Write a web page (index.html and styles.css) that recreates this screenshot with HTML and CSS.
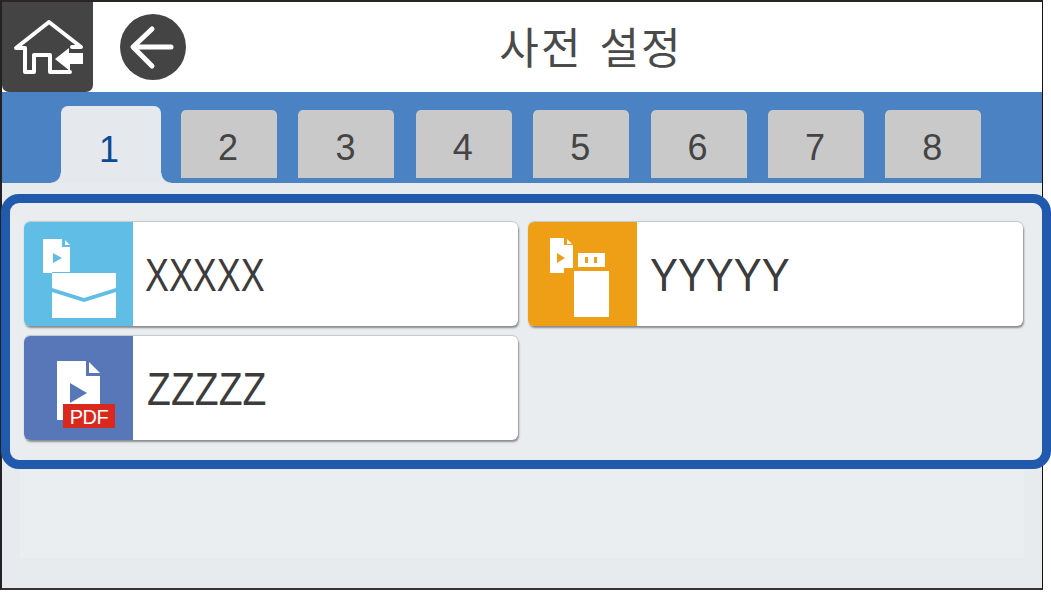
FILE: index.html
```html
<!DOCTYPE html>
<html lang="ko">
<head>
    <meta charset="UTF-8">
    <title>사전 설정</title>
    <link rel="stylesheet" href="styles.css">
</head>
<body>
    <div class="screen">
        <div class="header">
            <div class="home-btn">
                <svg width="91" height="90" viewBox="0 0 91 90">
                    <path class="line home-line" d="M68 70H48V53H32V70H23V46H14L47 20L79 45H70"/>
                    <path class="solid" d="M67 46L53 57L68 69V62H81V51H67Z"/>
                </svg>
            </div>
            <div class="back-btn">
                <svg width="66" height="66" viewBox="0 0 66 66">
                    <path class="line" d="M51 33H14M32 15L13 33L32 52"/>
                </svg>
            </div>
            <h1 class="title">사전 설정</h1>
        </div>

        <div class="tabs">
            <div class="tab active">1</div>
            <div class="tab">2</div>
            <div class="tab">3</div>
            <div class="tab">4</div>
            <div class="tab">5</div>
            <div class="tab">6</div>
            <div class="tab">7</div>
            <div class="tab">8</div>
        </div>

        <div class="panel">
            <div class="tile">
                <div class="tile-icon mail">
                    <svg width="109" height="104" viewBox="0 0 109 104">
                        <path class="solid" d="M19 17H38V25H46V50H28V51H19Z"/>
                        <path class="solid" d="M41 18L46 23H41Z"/>
                        <path class="mail-fill" d="M29 31L38 36L29 41Z"/>
                        <path class="solid" d="M28 51H92V66L60 76L28 66Z"/>
                        <path class="solid" d="M28 70L60 80L92 70V96H28Z"/>
                    </svg>
                </div>
                <span class="tile-label label-x">XXXXX</span>
            </div>
            <div class="tile">
                <div class="tile-icon usb">
                    <svg width="109" height="104" viewBox="0 0 109 104">
                        <path class="solid" d="M22 16H36V23H45V46H36V51H22Z"/>
                        <path class="solid" d="M39 17L44 22H39Z"/>
                        <path class="usb-fill" d="M29 31L37 36L29 41Z"/>
                        <path class="solid" fill-rule="evenodd" d="M50 31H77V45H50ZM57 35V41H60V35ZM66 35V41H69V35Z"/>
                        <rect class="solid" x="46" y="49" width="35" height="46"/>
                    </svg>
                </div>
                <span class="tile-label label-y">YYYYY</span>
            </div>
            <div class="tile">
                <div class="tile-icon pdf">
                    <svg width="109" height="104" viewBox="0 0 109 104">
                        <path class="solid" d="M33 25H62V40H76V84H33Z"/>
                        <path class="solid" d="M65 26L76 37H65Z"/>
                        <path class="pdf-fill" d="M46 47L63 57L46 67Z"/>
                        <rect class="pdf-badge" x="39" y="68" width="52" height="24"/>
                        <text class="pdf-text" x="65" y="88">PDF</text>
                    </svg>
                </div>
                <span class="tile-label label-z">ZZZZZ</span>
            </div>
        </div>

        <div class="spare"></div>
    </div>
</body>
</html>
```

FILE: styles.css
```css
body {
    margin: 0;
    background-color: #fff;
    font-family: "Liberation Sans", Arial, sans-serif;
}

.screen {
    width: 1040px;
    height: 586px;
    border-top: 2px solid #2a2622;
    border-left: 2px solid #222;
    border-right: 1px solid #111;
    border-bottom: 2px solid #333;
    background-color: #e7ebee;
}

/* header */
.header {
    height: 90px;
    display: flex;
    align-items: center;
    background-color: #fff;
}
.home-btn {
    width: 91px;
    height: 90px;
    background-color: #444;
    border-radius: 0 0 7px 7px;
}
.back-btn {
    width: 66px;
    height: 66px;
    margin-left: 27px;
    background-color: #444;
    border-radius: 50%;
}
.header svg {
    display: block;
}
.line {
    fill: none;
    stroke: #fff;
    stroke-width: 5;
    stroke-linecap: round;
    stroke-linejoin: round;
}
.home-line {
    stroke-width: 4;
}
.solid {
    fill: #fff;
}
.title {
    flex: 1;
    margin: 0;
    padding-right: 46px;
    padding-bottom: 4px;
    text-align: center;
    font-family: "Noto Sans CJK KR", sans-serif;
    font-size: 43px;
    font-weight: 400;
    letter-spacing: 2px;
    word-spacing: 3px;
    color: #4a4a4a;
}

/* tabs */
.tabs {
    height: 91px;
    display: flex;
    align-items: flex-end;
    padding-left: 59px;
    box-sizing: border-box;
    background-color: #4a82c4;
}
.tab {
    width: 96px;
    height: 68px;
    margin-right: 21.4px;
    margin-bottom: 5px;
    padding-right: 2px;
    box-sizing: border-box;
    line-height: 75px;
    text-align: center;
    font-size: 36px;
    color: #444;
    background-color: #c9c9c9;
    border-radius: 5px 5px 0 0;
}
.tab.active {
    position: relative;
    width: 100px;
    height: 77px;
    margin-right: 20px;
    margin-bottom: 0;
    padding-right: 4px;
    line-height: 87px;
    color: #0d4a94;
    background-color: #e5e9ee;
    border-radius: 7px 7px 0 0;
}
.tab.active::before,
.tab.active::after {
    content: "";
    position: absolute;
    bottom: 0;
    width: 10px;
    height: 10px;
}
.tab.active::before {
    left: -10px;
    background: radial-gradient(circle at 0 0, #4a82c4 9px, #e5e9ee 10px);
}
.tab.active::after {
    right: -10px;
    background: radial-gradient(circle at 100% 0, #4a82c4 9px, #e5e9ee 10px);
}

/* highlighted panel */
.panel {
    display: grid;
    grid-template-columns: 494px 495px;
    grid-auto-rows: 104px;
    gap: 10px;
    margin: 11px -9px 0 -1px;
    padding: 19px 19px 20px 14px;
    border: 9px solid #2159ad;
    border-radius: 18px;
    background-color: #e9edf0;
}
.tile {
    display: flex;
    align-items: center;
    background-color: #fff;
    border-radius: 6px;
    box-shadow: 1px 2px 2px #8c8c8c, 0 -1px 1px #c4c7ca;
    overflow: hidden;
}
.tile-icon {
    width: 109px;
    height: 104px;
    flex: none;
}
.tile-icon svg {
    display: block;
}
.mail {
    background-color: #5fbde6;
}
.usb {
    background-color: #ef9f15;
}
.pdf {
    background-color: #5877b8;
}
.mail-fill {
    fill: #5fbde6;
}
.usb-fill {
    fill: #ef9f15;
}
.pdf-fill {
    fill: #5877b8;
}
.pdf-badge {
    fill: #d9281c;
}
.pdf-text {
    fill: #fff;
    font-size: 20px;
    letter-spacing: -0.5px;
    text-anchor: middle;
}
.tile-label {
    display: inline-block;
    margin-left: 12px;
    padding-top: 1px;
    font-size: 46px;
    color: #3c3c3c;
    transform-origin: left center;
}
.label-x {
    transform: scaleX(0.78);
}
.label-y {
    margin-left: 13px;
    transform: scaleX(0.91);
}
.label-z {
    margin-left: 14px;
    transform: scaleX(0.85);
}

.spare {
    height: 88px;
    margin: 1px 18px 0;
    background-color: #ebeef0;
}
```
